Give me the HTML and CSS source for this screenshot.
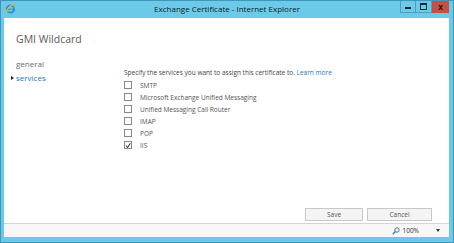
FILE: index.html
```html
<!DOCTYPE html>
<html lang="en">
<head>
    <meta charset="UTF-8">
    <title>Exchange Certificate - Internet Explorer</title>
    <link rel="stylesheet" href="styles.css">
</head>
<body>
    <div class="window">

        <!-- Title bar -->
        <div class="titlebar">
            <svg class="ie-icon" width="11" height="11" viewBox="0 0 11 11">
                <circle cx="5.5" cy="6" r="3.6" fill="none" stroke="#2a8fd8" stroke-width="2"/>
                <rect x="2.5" y="5.6" width="6" height="1.2" fill="#2a8fd8"/>
                <path d="M1 9.5 C 3 4, 7 1, 10 1.5" fill="none" stroke="#e9b53a" stroke-width="1.2"/>
                <path d="M10 1.5 C 9 4, 6 8, 1 9.5" fill="none" stroke="#8fc54a" stroke-width="0.8"/>
            </svg>
            <span class="title">Exchange Certificate - Internet Explorer</span>
            <div class="controls">
                <span class="ctl ctl-min"><i></i></span>
                <span class="ctl ctl-max"><i></i></span>
                <span class="ctl ctl-close">x</span>
            </div>
        </div>

        <!-- Client area -->
        <div class="client">
            <div class="page">
                <h1>GMI Wildcard</h1>
                <div class="body">
                    <ul class="nav">
                        <li>general</li>
                        <li class="active">services</li>
                    </ul>
                    <div class="form">
                        <p class="intro">Specify the services you want to assign this certificate to. <a href="#">Learn more</a></p>
                        <label class="check"><span class="box"></span>SMTP</label>
                        <label class="check"><span class="box"></span>Microsoft Exchange Unified Messaging</label>
                        <label class="check"><span class="box"></span>Unified Messaging Call Router</label>
                        <label class="check"><span class="box"></span>IMAP</label>
                        <label class="check"><span class="box"></span>POP</label>
                        <label class="check"><span class="box checked">
                            <svg width="7" height="7" viewBox="0 0 7 7"><path d="M1 3.5 L3 5.8 L6.3 0.8" fill="none" stroke="#333" stroke-width="1.2"/></svg>
                        </span>IIS</label>
                    </div>
                </div>
                <div class="actions">
                    <button class="btn btn-save">Save</button>
                    <button class="btn btn-cancel">Cancel</button>
                </div>
            </div>
            <div class="statusbar">
                <svg width="8" height="8" viewBox="0 0 8 8">
                    <circle cx="5" cy="3" r="2.2" fill="none" stroke="#4a78a8" stroke-width="1"/>
                    <line x1="3.4" y1="4.6" x2="0.8" y2="7.2" stroke="#4a78a8" stroke-width="1.4"/>
                </svg>
                <span class="zoom">100%</span>
                <span class="caret"></span>
            </div>
        </div>

    </div>
</body>
</html>
```

FILE: styles.css
```css
/* --- Base --- */
body {
    margin: 0;
    font-family: 'Open Sans', 'Noto Sans', sans-serif;
    background-color: #ffffff;
}

/* --- Window frame --- */
.window {
    width: 454px;
    height: 243px;
    box-sizing: border-box;
    background-color: #6ccae9;
    border: 1px solid #3f95ba;
    display: flex;
    flex-direction: column;
}

.titlebar {
    height: 17px;
    display: flex;
    align-items: flex-start;
    position: relative;
}

.ie-icon {
    margin: 2px 0 0 4px;
}

.title {
    position: absolute;
    left: 0;
    right: 0;
    top: 2px;
    text-align: center;
    font-size: 8px;
    color: #14202a;
}

.controls {
    margin-left: auto;
    margin-right: 4px;
    display: flex;
    position: relative;
}

.ctl {
    height: 12px;
    display: flex;
    align-items: center;
    justify-content: center;
    box-sizing: border-box;
}

.ctl-min,
.ctl-max {
    width: 16px;
    border: 1px solid #4e9fc0;
    border-top: none;
}
.ctl-max {
    border-left: none;
}

.ctl-min i {
    width: 6px;
    height: 2px;
    margin-top: 3px;
    background-color: #1c2a35;
}

.ctl-max i {
    width: 5px;
    height: 4px;
    border: 1px solid #1c2a35;
    border-top-width: 2px;
}

.ctl-close {
    width: 17px;
    background-color: #c94f45;
    color: #2a1512;
    font-size: 8px;
    font-weight: 700;
    line-height: 1;
}

/* --- Client area --- */
.client {
    flex: 1;
    margin: 0 4px 5px 3px;
    background-color: #ffffff;
    display: flex;
    flex-direction: column;
}

.page {
    flex: 1;
    display: flex;
    flex-direction: column;
    padding: 0 17px 0 12px;
}

h1 {
    margin: 14px 0 0;
    font-size: 10.5px;
    font-weight: 400;
    color: #5a5a5a;
}

.body {
    display: flex;
    margin-top: 11px;
}

/* --- Side navigation --- */
.nav {
    list-style: none;
    margin: 0;
    padding: 0;
    width: 108px;
    font-size: 8px;
}

.nav li {
    color: #6a6a6a;
    line-height: 14px;
    position: relative;
}

.nav li.active {
    color: #2477bd;
}

.nav li.active::before {
    content: "";
    position: absolute;
    left: -5px;
    top: 5px;
    border-left: 3px solid #222;
    border-top: 2px solid transparent;
    border-bottom: 2px solid transparent;
}

/* --- Services form --- */
.form {
    padding-top: 11px;
    font-size: 6.5px;
    color: #444;
}

.intro {
    margin: 0 0 2px;
}

.intro a {
    color: #2477bd;
    text-decoration: none;
}

.check {
    display: flex;
    align-items: center;
    height: 12px;
    color: #555;
}

.box {
    width: 6px;
    height: 6px;
    border: 1px solid #8a8a8a;
    background-color: #fff;
    margin-right: 8px;
    display: flex;
    align-items: center;
    justify-content: center;
}

/* --- Buttons --- */
.actions {
    margin-top: auto;
    margin-bottom: 2px;
    display: flex;
    justify-content: flex-end;
    gap: 4px;
}

.btn {
    height: 13px;
    padding: 0;
    background-color: #f4f4f4;
    border: 1px solid #c8c8c8;
    font-family: inherit;
    font-size: 6.5px;
    color: #555;
}

.btn-save { width: 58px; }
.btn-cancel { width: 65px; }

/* --- Status bar --- */
.statusbar {
    height: 13px;
    border-top: 1px solid #d4d4d4;
    background-color: #f7f7f7;
    display: flex;
    align-items: center;
    justify-content: flex-end;
    font-size: 6.5px;
    color: #333;
    padding-right: 9px;
}

.zoom {
    margin-left: 2px;
}

.caret {
    margin-left: 17px;
    border-top: 3px solid #333;
    border-left: 2px solid transparent;
    border-right: 2px solid transparent;
}
```
